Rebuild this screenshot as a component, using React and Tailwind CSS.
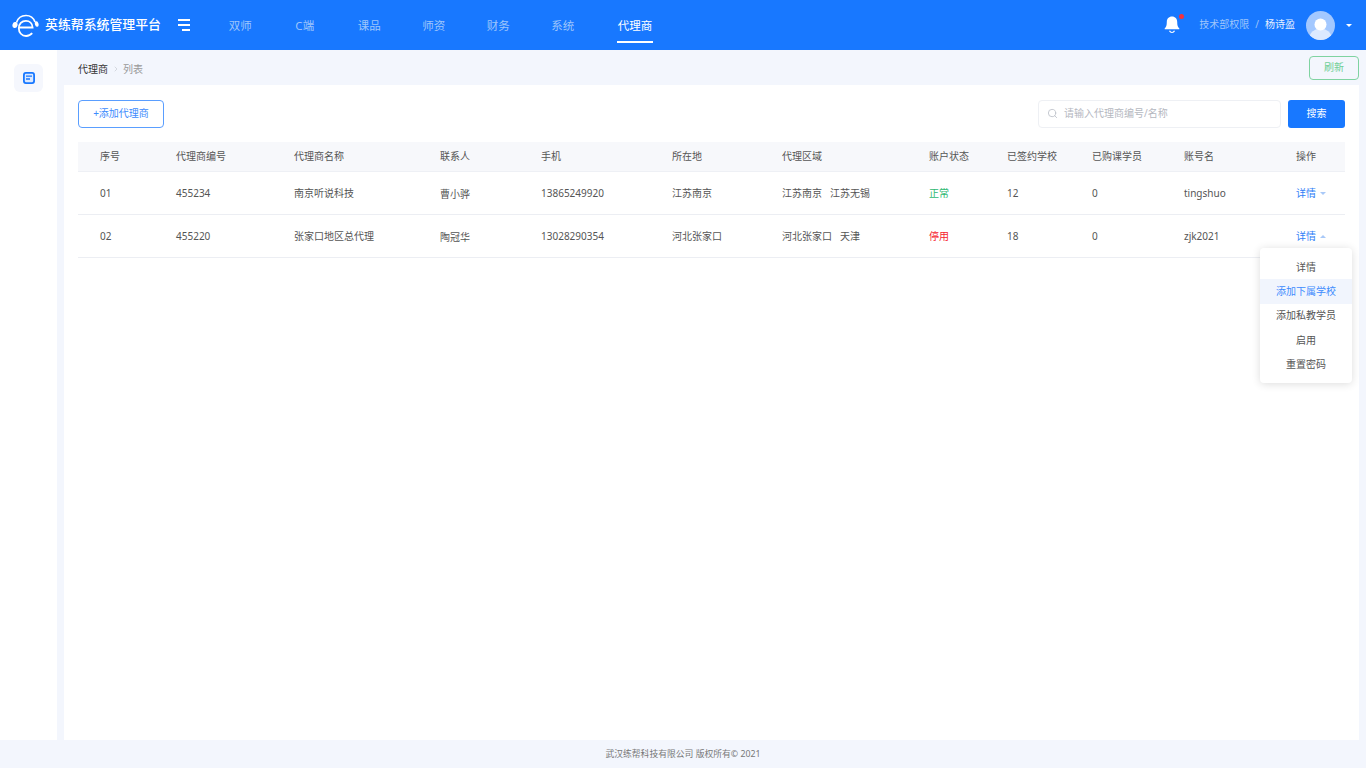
import React from 'react';
import { ChevronRight, Search } from 'lucide-react';

const nav = ['双师', 'C端', '课品', '师资', '财务', '系统'];

const columns = ['序号', '代理商编号', '代理商名称', '联系人', '手机', '所在地', '代理区域', '账户状态', '已签约学校', '已购课学员', '账号名', '操作'];

const rows = [
  { no: '01', code: '455234', name: '南京听说科技', contact: '曹小骅', phone: '13865249920', city: '江苏南京', area: ['江苏南京', '江苏无锡'], status: '正常', ok: true, schools: '12', students: '0', account: 'tingshuo', open: false },
  { no: '02', code: '455220', name: '张家口地区总代理', contact: '陶冠华', phone: '13028290354', city: '河北张家口', area: ['河北张家口', '天津'], status: '停用', ok: false, schools: '18', students: '0', account: 'zjk2021', open: true },
];

const menu = ['详情', '添加下属学校', '添加私教学员', '启用', '重置密码'];

const gridCols = 'grid grid-cols-[98px_118px_146px_101px_131px_110px_147px_78px_85px_92px_112px_49px]';

const Logo = () => (
  <svg width="27" height="24" viewBox="0 0 27 24" fill="none">
    <path d="M4.500 8.500C6 3.800 9.800 1.500 14 1.500S21.500 3.800 23 8" stroke="white" strokeWidth="1.700" />
    <path d="M7 13.500h13.600C20.400 9.500 17.600 6.800 13.900 6.800 9.800 6.800 6.800 10 6.800 14.200c0 4.400 3 7.800 7.300 7.800 2.500 0 4.600-1 6.100-2.800" stroke="white" strokeWidth="1.800" />
    <ellipse cx="3" cy="11" rx="2.500" ry="3.100" transform="rotate(15 3 11)" fill="white" />
    <ellipse cx="24.700" cy="10" rx="1.800" ry="2.800" transform="rotate(-15 24.700 10)" fill="white" />
  </svg>
);

const Bell = () => (
  <svg width="16" height="18" viewBox="0 0 16 18" fill="white">
    <path d="M8 0.500c-3.200 0-5.200 2.400-5.200 5.400 0 3.200-.6 5-2.100 6.500-.3.300-.1.900.4.900h13.800c.5 0 .7-.6.400-.9-1.500-1.500-2.100-3.300-2.100-6.500 0-3-2-5.400-5.200-5.400z" />
    <path d="M5.500 14.800c.5 1.100 1.400 1.700 2.500 1.700s2-.6 2.500-1.700" fill="none" stroke="white" strokeWidth="1.200" />
  </svg>
);

const Avatar = () => (
  <svg width="29" height="29" viewBox="0 0 29 29">
    <circle cx="14.500" cy="14.500" r="14.500" fill="#a3c8ff" />
    <clipPath id="avatar-clip"><circle cx="14.500" cy="14.500" r="14.500" /></clipPath>
    <g clipPath="url(#avatar-clip)">
      <ellipse cx="14.500" cy="27" rx="11" ry="9.500" fill="#dce9ff" />
      <circle cx="14.500" cy="13.500" r="6" fill="white" />
    </g>
  </svg>
);

export default function App() {
  return (
    <div className="h-[768px] w-full overflow-hidden bg-[#f3f6fd] flex flex-col text-[10px] text-[#555] font-['Noto_Sans','Noto_Sans_CJK_SC',sans-serif]">
      <header className="h-[50px] shrink-0 bg-[#1878ff] flex items-center">
        <div className="ml-[12px] mt-[1px]"><Logo /></div>
        <span className="ml-[6px] w-[116px] text-[12.900px] font-medium text-white whitespace-nowrap">英练帮系统管理平台</span>
        <div className="ml-[17px] w-[12px] flex flex-col items-end gap-[3px]">
          <span className="h-[2px] w-[12px] bg-white" />
          <span className="h-[2px] w-[12px] bg-white" />
          <span className="h-[2px] w-[8px] bg-white" />
        </div>
        <nav className="ml-[16.500px] flex h-full">
          {nav.map((item) => (
            <div key={item} className="w-[64.500px] h-full flex items-center justify-center pl-[3px] pt-[1px] text-[11.500px] text-[#9ec5fb]">
              {item}
            </div>
          ))}
          <div className="ml-[23.500px] w-[36px] h-full relative flex items-center justify-center pt-[1px] text-[11.500px] text-white whitespace-nowrap">
            代理商
            <span className="absolute left-0 right-0 bottom-[7px] h-[2px] bg-white" />
          </div>
        </nav>
        <div className="ml-auto flex items-center">
          <div className="relative mr-[19px]">
            <Bell />
            <span className="absolute right-[-3.500px] top-[-2.500px] h-[5px] w-[5px] rounded-full bg-[#f5313d]" />
          </div>
          <span className="text-[#9ec5fb] mb-[2px]">技术部权限</span>
          <span className="mx-[6px] text-[#9ec5fb] mb-[2px]">/</span>
          <span className="text-[#e6f0ff] mb-[2px]">杨诗盈</span>
          <div className="ml-[11px]"><Avatar /></div>
          <span className="ml-[11px] mr-[14px] h-0 w-0 border-x-[3px] border-t-[3px] border-x-transparent border-t-white" />
        </div>
      </header>

      <div className="flex-1 flex min-h-0">
        <aside className="w-[57px] shrink-0 bg-white pt-[14px] pl-[14px]">
          <div className="h-[28px] w-[29px] rounded-[6px] bg-[#f5f7fd] flex items-center justify-center">
            <svg width="12" height="12" viewBox="0 0 12 12" fill="none">
              <rect x="0.900" y="0.900" width="10.200" height="10.200" rx="2" fill="#dce9ff" stroke="#1878ff" strokeWidth="1.800" />
              <path d="M3 4.200h6M3 7h4" stroke="#1878ff" strokeWidth="1.300" />
            </svg>
          </div>
        </aside>

        <main className="flex-1 min-w-0 flex flex-col px-[7px]">
          <div className="h-[35px] shrink-0 flex items-center pl-[14px] pt-[3px] relative">
            <span className="text-[#333]">代理商</span>
            <ChevronRight size={8} className="mx-[3.500px] text-[#c4c8d0]" />
            <span className="text-[#999]">列表</span>
            <button className="absolute right-0 top-[5.500px] h-[24px] w-[50px] rounded-[4px] border border-[#7fd3a1] bg-[#f3f6fd] text-[#6fcf97] text-[10px]">刷新</button>
          </div>

          <section className="flex-1 bg-white px-[14px] pt-[14.500px] relative">
            <div className="flex items-center h-[28.500px]">
              <button className="h-[28.500px] w-[86px] rounded-[4px] border border-[#5a9eff] text-[#3d8bfd] text-[10px]">+添加代理商</button>
              <div className="ml-auto h-[28.500px] w-[243px] rounded-[4px] border border-[#eef0f4] flex items-center pl-[8px]">
                <Search size={11} className="text-[#c0c4cc]" />
                <span className="ml-[6px] text-[#b5b8bf]">请输入代理商编号/名称</span>
              </div>
              <button className="ml-[7px] h-[28.500px] w-[57px] rounded-[3px] bg-[#1878ff] text-white text-[10px]">搜索</button>
            </div>

            <div className="mt-[14px]">
              <div className={`${gridCols} h-[30px] items-center bg-[#f7f8fb] border-b border-[#eef0f5]`}>
                {columns.map((col, i) => (
                  <div key={col} className={i === 0 ? 'pl-[22px]' : ''}>{col}</div>
                ))}
              </div>
              {rows.map((row) => (
                <div key={row.no} className={`${gridCols} h-[43px] pt-[1px] items-center border-b border-[#eceef3]`}>
                  <div className="pl-[22px]">{row.no}</div>
                  <div>{row.code}</div>
                  <div>{row.name}</div>
                  <div className="pt-[1px]">{row.contact}</div>
                  <div>{row.phone}</div>
                  <div>{row.city}</div>
                  <div className="flex gap-[8px]">
                    {row.area.map((a) => <span key={a}>{a}</span>)}
                  </div>
                  <div className={row.ok ? 'text-[#2eb872]' : 'text-[#f5222d]'}>{row.status}</div>
                  <div>{row.schools}</div>
                  <div>{row.students}</div>
                  <div>{row.account}</div>
                  <div className="flex items-center text-[#2f80f7] whitespace-nowrap">
                    详情
                    {row.open ? (
                      <span className="ml-[4px] h-0 w-0 border-x-[3px] border-b-[3px] border-x-transparent border-b-[#a9c9f8]" />
                    ) : (
                      <span className="ml-[4px] h-0 w-0 border-x-[3px] border-t-[3px] border-x-transparent border-t-[#a9c9f8]" />
                    )}
                  </div>
                </div>
              ))}
            </div>

            {/* row action menu stays open over the table */}
            <div className="absolute right-[7px] top-[163px] w-[92px] rounded-[4px] bg-white pt-[7px] pb-[7px] shadow-[0_1px_8px_rgba(0,0,0,0.14)]">
              {menu.map((item, i) => (
                <div key={item} className={`h-[24.300px] flex items-center justify-center ${i === 1 ? 'bg-[#f1f5fd] text-[#3d8bfd]' : ''}`}>{item}</div>
              ))}
            </div>
          </section>
        </main>
      </div>

      <footer className="h-[28px] shrink-0 flex items-center justify-center pt-[1px] text-[8.800px] text-[#777]">武汉练帮科技有限公司 版权所有© 2021</footer>
    </div>
  );
}
